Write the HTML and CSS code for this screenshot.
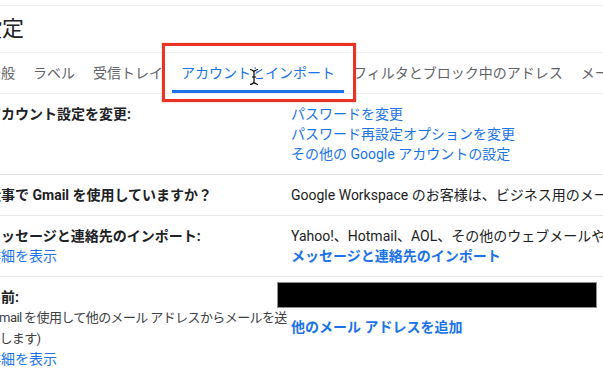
FILE: index.html
```html
<!DOCTYPE html>
<html lang="ja">

<head>
    <meta charset="UTF-8">
    <meta name="viewport" content="width=device-width, initial-scale=1.0">
    <title>設定</title>
    <link rel="stylesheet" href="styles.css">
</head>

<body>
    <div class="topbar"></div>
    <div class="page">
        <h1 class="title">設定</h1>
        <nav class="tabs">
            <span class="tab">全般</span>
            <span class="tab">ラベル</span>
            <span class="tab">受信トレイ</span>
            <span class="tab active">アカウントとインポート</span>
            <span class="tab">フィルタとブロック中のアドレス</span>
            <span class="tab">メール転送と POP/IMAP</span>
        </nav>

        <div class="row">
            <div class="label"><b>アカウント設定を変更:</b></div>
            <div class="value">
                <a href="#">パスワードを変更</a><br>
                <a href="#">パスワード再設定オプションを変更</a><br>
                <a href="#">その他の Google アカウントの設定</a>
            </div>
        </div>

        <div class="row">
            <div class="label"><b>仕事で Gmail を使用していますか？</b></div>
            <div class="value">Google Workspace のお客様は、ビジネス用のメール アドレスを使用できます。</div>
        </div>

        <div class="row">
            <div class="label">
                <b>メッセージと連絡先のインポート:</b><br>
                <a href="#">詳細を表示</a>
            </div>
            <div class="value">
                Yahoo!、Hotmail、AOL、その他のウェブメールやPOP3アカウントからインポートします。<br>
                <a href="#" class="strong">メッセージと連絡先のインポート</a>
            </div>
        </div>

        <div class="row last">
            <div class="label">
                <b>名前:</b><br>
                <span class="note">(Gmail を使用して他のメール アドレスからメールを送<br>信します)</span><br>
                <a href="#">詳細を表示</a>
            </div>
            <div class="value">
                <div class="name-box"></div>
                <a href="#" class="strong add">他のメール アドレスを追加</a>
            </div>
        </div>
    </div>

    <div class="highlight"></div>
    <svg class="cursor" width="12" height="18" viewBox="0 0 12 18">
        <path d="M2 1.5 C4 1.5 5 2.5 6 3.5 C7 2.5 8 1.5 10 1.5 M6 3.5 V14.5 M2 16.5 C4 16.5 5 15.5 6 14.5 C7 15.5 8 16.5 10 16.5 M4 9 H8"
            fill="none" stroke="#fff" stroke-width="3" />
        <path d="M2 1.5 C4 1.5 5 2.5 6 3.5 C7 2.5 8 1.5 10 1.5 M6 3.5 V14.5 M2 16.5 C4 16.5 5 15.5 6 14.5 C7 15.5 8 16.5 10 16.5 M4 9 H8"
            fill="none" stroke="#000" stroke-width="1.2" />
    </svg>
</body>

</html>
```

FILE: styles.css
```css
body {
    margin: 0;
    overflow: hidden;
    background: #fff;
    color: #202124;
    font-family: Roboto, "Noto Sans CJK JP", sans-serif;
    font-size: 14px;
}

a {
    color: #1a73e8;
    text-decoration: none;
}

.topbar {
    height: 5px;
    border-bottom: 1px solid #eceff1;
}

.page {
    margin-left: -13px;
    white-space: nowrap;
}

.title {
    margin: 0 -20px 0 -7px;
    height: 46px;
    line-height: 46px;
    font-size: 22px;
    font-weight: 400;
    color: #202124;
    border-bottom: 1px solid #eceff1;
}

.tabs {
    display: flex;
    height: 40px;
    margin-left: -9px;
    border-bottom: 1px solid #eceff1;
}

.tab {
    box-sizing: border-box;
    height: 40px;
    line-height: 40px;
    padding: 0 9px;
    color: #5f6368;
    flex-shrink: 0;
}

.tab.active {
    color: #1a73e8;
    border-bottom: 3px solid #1a73e8;
}

.row {
    display: grid;
    grid-template-columns: 304px 1fr;
    padding: 10px 0;
    line-height: 20px;
    border-bottom: 1px solid #e3e5e8;
}

.row.last {
    border-bottom: 0;
}

.label b,
.strong {
    font-weight: 700;
}

.note {
    font-size: 13px;
    letter-spacing: -0.6px;
    color: #3c4043;
}

.name-box {
    box-sizing: border-box;
    width: 320px;
    height: 26px;
    margin: -5px 0 0 -14px;
    background: #000;
    border: 1px solid #8f8f8f;
}

.add {
    display: inline-block;
    margin-top: 9px;
}

.highlight {
    position: absolute;
    left: 162px;
    top: 43px;
    width: 194px;
    height: 59px;
    box-sizing: border-box;
    border: 3px solid #ea3323;
    box-shadow: 0 0 1px rgba(234, 51, 35, 0.6);
}

.cursor {
    position: absolute;
    left: 248px;
    top: 68px;
}
```
